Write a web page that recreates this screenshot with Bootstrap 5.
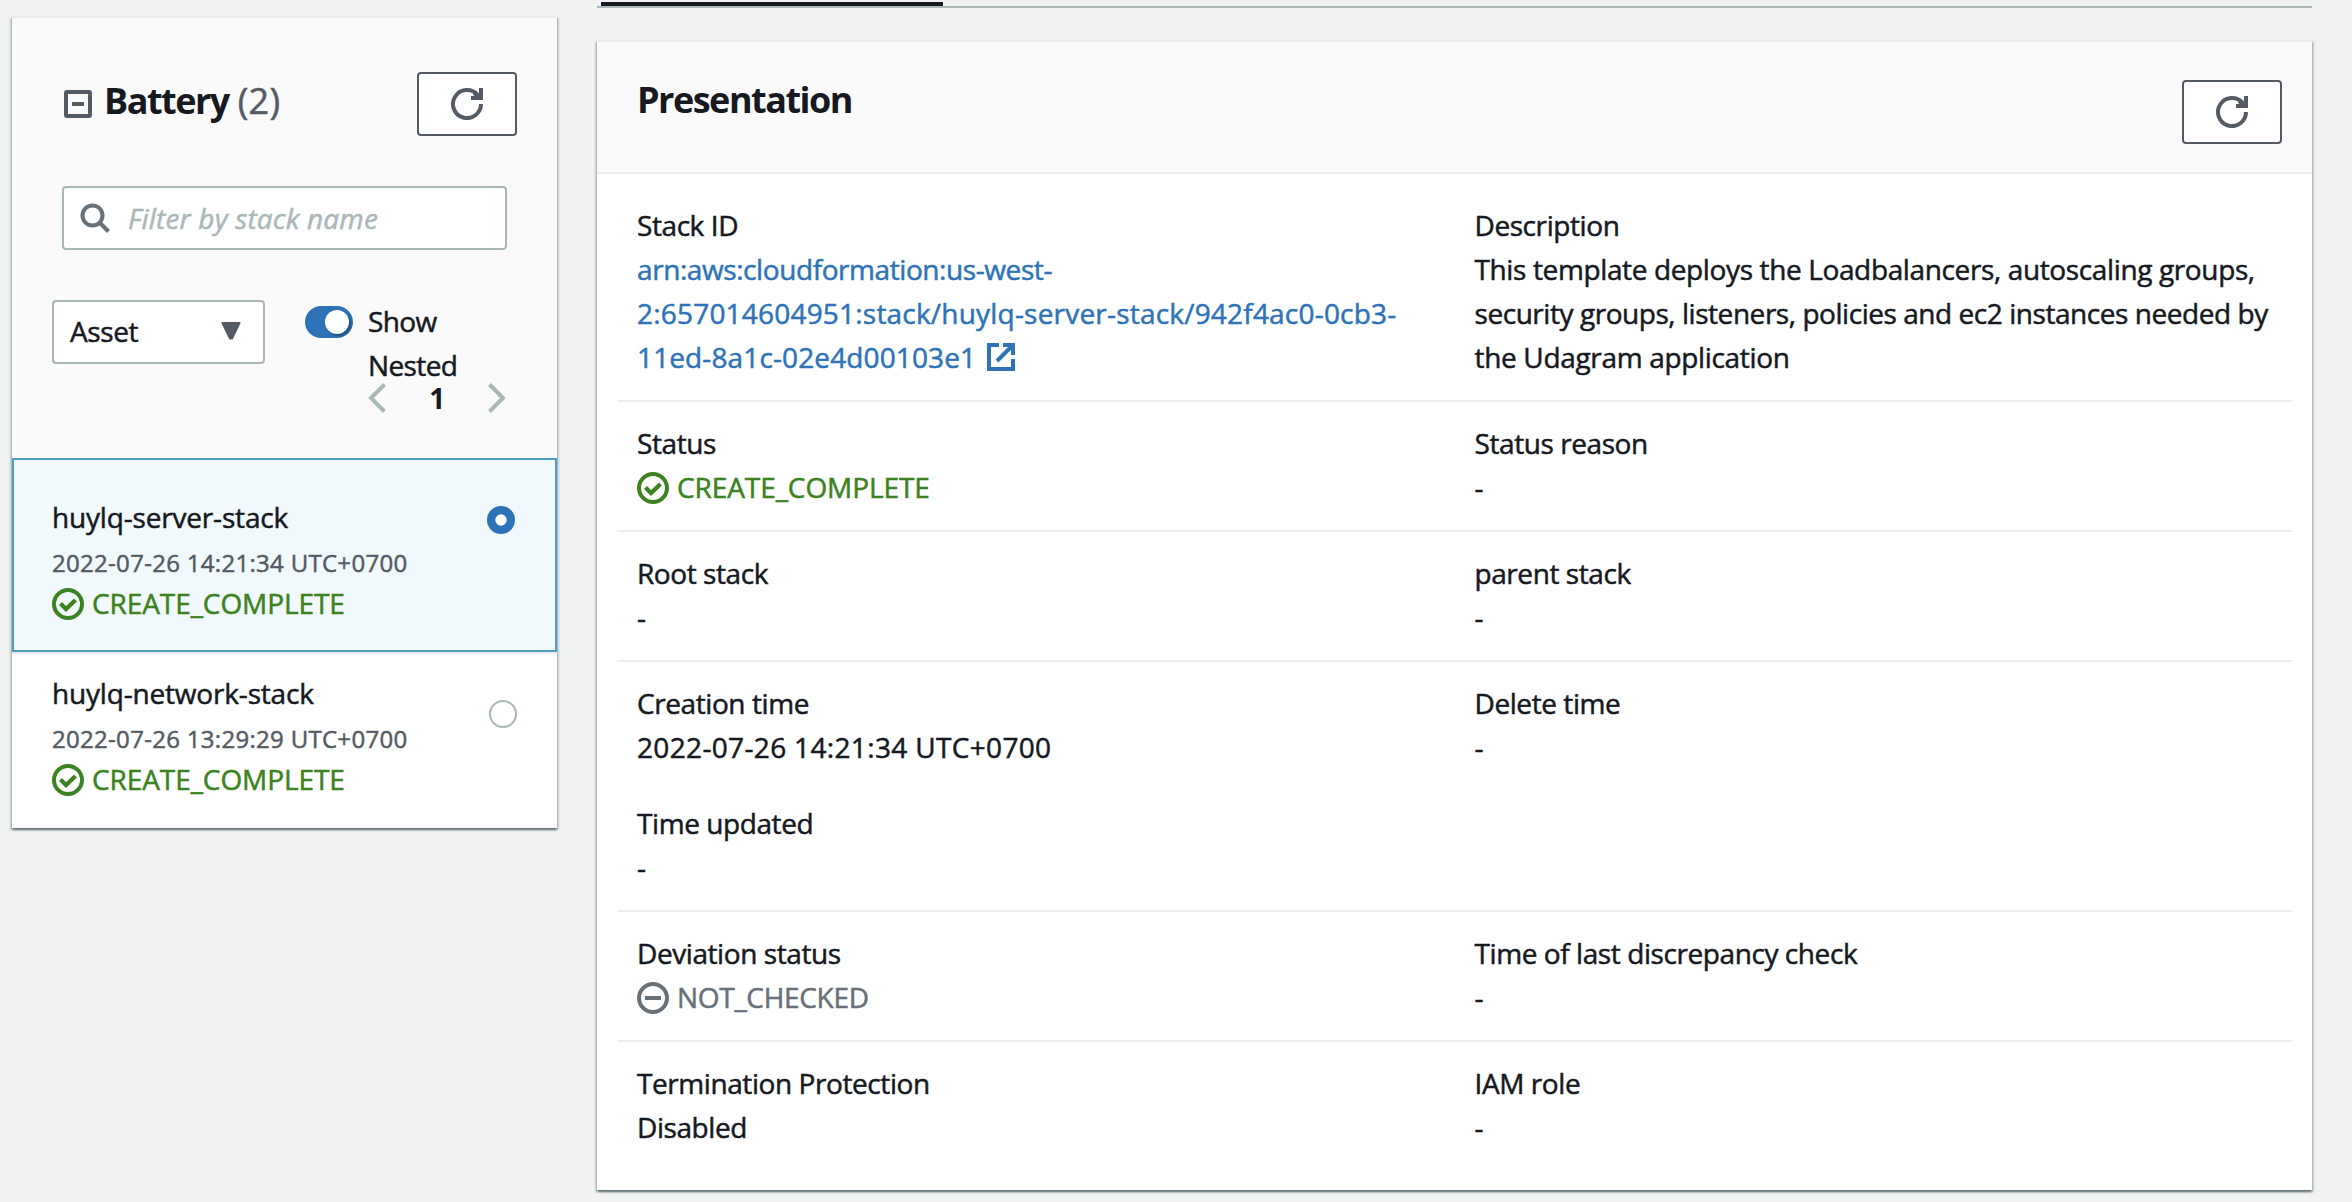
<!DOCTYPE html>
<html lang="en">
<head>
<meta charset="utf-8">
<title>CloudFormation - Stack</title>
<link rel="stylesheet" href="https://cdn.jsdelivr.net/npm/bootstrap@5.3.0/dist/css/bootstrap.min.css">
<style>
body{background:#f1f3f3;color:#16191f;font-family:"Open Sans","Noto Sans",sans-serif;font-size:28px;line-height:44px;letter-spacing:-.42px;-webkit-text-stroke:.5px currentColor;height:1202px;overflow:hidden}
svg{display:block;flex:none}
.page{height:1202px}
.panel{background:#fff;border-top:2px solid #eaeded;box-shadow:0 2px 2px rgba(0,28,36,.45),2px 2px 2px rgba(0,28,36,.15),-2px 2px 2px rgba(0,28,36,.15)}
.side{width:545px;height:812px;margin:16px 0 0 12px;flex:none}
.side-head{background:#fafafa;height:440px;padding:54px 40px 0}
.main-col{width:1715px;margin-left:40px;flex:none}
.tabline{height:8px;border-bottom:2px solid #aab7b8;padding:2px 0 0 4px}
.tab-on{width:342px;height:4px;background:#16191f}
.main-panel{margin-top:32px;height:1150px}
.main-head{height:132px;background:#fafafa;border-bottom:2px solid #eaeded;padding:38px 30px 0 40px}
.ttl{font-size:36px;font-weight:700;line-height:44px;margin:0;letter-spacing:-1.5px;color:#16191f;-webkit-text-stroke:0}
.ttl-side{margin:7px 0 0 12px}
.ttl-main{margin-top:-2px}
.cnt{font-weight:400;color:#545b64;letter-spacing:.3px;margin-left:1px;-webkit-text-stroke:.5px currentColor}
.btn-refresh{width:100px;height:64px;border:2px solid #545b64;border-radius:4px;background:#fff;padding:0}
.gray-ic{color:#545b64}
.fold-ic{margin:18px 0 0 12px}
.search{width:445px;height:64px;margin:50px 0 0 10px;border:2px solid #aab7b8;border-radius:4px;background:#fff;padding-left:16px}
.search input{border:0;background:transparent;outline:0;padding:0 0 0 18px;font-style:italic;letter-spacing:.18px;width:380px;height:58px}
.search input::placeholder{color:#aab7b8;opacity:1}
.controls{margin-top:50px}
.pick{width:213px;height:64px;border:2px solid #aab7b8;border-radius:4px;background:#fff;padding:0 22px 2px 16px}
.switch-box{width:48px;height:32px;border-radius:16px;background:#2e73b8;padding:4px;margin:6px 0 0 40px;flex:none}
.knob{width:24px;height:24px;border-radius:50%;background:#fff;box-shadow:2px 2px 2px rgba(0,28,36,.4)}
.switch-label{width:100px;margin:-1px 0 0 15px;letter-spacing:-.6px}
.pager{margin:-4px 11px 0 0;height:30px}
.pager b{width:102px;line-height:28px;-webkit-text-stroke:0}
.stack-item{padding:17px 40px 27px;height:174px}
.stack-item.on{height:194px;border:2px solid #4aa0c6;background:#f2f9fd;padding:35px 38px 25px}
.radio-on{margin:11px 2px 0 0}
.radio-off{margin-top:29px}
.rule{height:2px;background:#ececec}
.nm{letter-spacing:-.18px}
.dt{font-size:24px;line-height:36px;margin-top:6px;color:#545b64;letter-spacing:.3px}
.ok{color:#3b8220;letter-spacing:-.08px}
.st{height:44px;padding-top:2px}
.st span{margin-left:8px;margin-top:-2px}
.nc{color:#687078;letter-spacing:-.3px}
.props{padding:29px 20px 0}
.prow{margin:0;padding:19px 0 21px;border-top:2px solid #ececec}
.prow:first-child{border:0;padding-top:0}
.prow>div{padding:0 20px}
.later{margin-top:32px}
.arn,.arn:hover{color:#2e73b8;text-decoration:none}
.arn-mid{letter-spacing:.2px}
.arn-end{letter-spacing:.12px}
.ext-ic{margin-left:11px}
.num{letter-spacing:.34px}
.desc-a{letter-spacing:-.37px}
.desc-b{letter-spacing:-.45px}
.desc-c{letter-spacing:-.33px}
</style>
</head>
<body>
<svg width="0" height="0" class="position-absolute">
<symbol id="refresh" viewBox="0 0 32 32"><path d="M30 16A14 14 0 1 1 26.600 6.900" fill="none" stroke="currentColor" stroke-width="4"/><path d="M28 0h4v12H20V8h8z" fill="currentColor"/><path d="M23 5l7 5" stroke="currentColor" stroke-width="4"/></symbol>
<symbol id="okay" viewBox="0 0 32 32"><circle cx="16" cy="16" r="14" fill="none" stroke="currentColor" stroke-width="4"/><path d="M8.500 15.500l5.500 5.500 9.500-9" fill="none" stroke="currentColor" stroke-width="4.200"/></symbol>
<symbol id="ring-minus" viewBox="0 0 32 32"><circle cx="16" cy="16" r="14" fill="none" stroke="currentColor" stroke-width="4"/><path d="M8 16h16" stroke="currentColor" stroke-width="4"/></symbol>
</svg>
<div class="page d-flex align-items-start">
  <aside class="side panel">
    <div class="side-head">
      <div class="d-flex align-items-start">
        <svg class="gray-ic fold-ic" width="28" height="28" viewBox="0 0 28 28"><rect x="2" y="2" width="24" height="24" rx="1" fill="none" stroke="currentColor" stroke-width="4"/><path d="M8 14h12" stroke="currentColor" stroke-width="4"/></svg>
        <h2 class="ttl ttl-side">Battery <span class="cnt">(2)</span></h2>
        <button class="btn btn-refresh gray-ic d-flex align-items-center justify-content-center ms-auto"><svg width="32" height="32"><use href="#refresh"/></svg></button>
      </div>
      <div class="search d-flex align-items-center">
        <svg width="30" height="30" viewBox="0 0 30 30" fill="none" stroke="#687078" stroke-width="4"><circle cx="12.500" cy="12.500" r="10"/><path d="M19.500 19.500l9 9"/></svg>
        <input type="text" placeholder="Filter by stack name">
      </div>
      <div class="controls d-flex align-items-start">
        <div class="pick d-flex align-items-center justify-content-between"><span>Asset</span><svg width="20" height="18" viewBox="0 0 20 18"><path d="M1.500 1h17L11 16.500H9z" fill="#545b64" stroke="#545b64" stroke-width="2" stroke-linejoin="round"/></svg></div>
        <div class="switch-box d-flex justify-content-end"><div class="knob"></div></div>
        <div class="switch-label">Show Nested</div>
      </div>
      <div class="pager d-flex justify-content-end align-items-center">
        <svg width="18" height="30" viewBox="0 0 18 30" fill="none" stroke="#aab7b8" stroke-width="4"><path d="M16.500 1.500L3 15l13.500 13.500"/></svg>
        <b class="text-center">1</b>
        <svg width="18" height="30" viewBox="0 0 18 30" fill="none" stroke="#aab7b8" stroke-width="4"><path d="M1.500 1.500L15 15 1.500 28.500"/></svg>
      </div>
    </div>
    <div class="stack-item on d-flex justify-content-between">
      <div>
        <div class="nm">huylq-server-stack</div>
        <div class="dt">2022-07-26 14:21:34 UTC+0700</div>
        <div class="st ok d-flex align-items-center"><svg width="32" height="32"><use href="#okay"/></svg><span>CREATE_COMPLETE</span></div>
      </div>
      <svg class="radio-on" width="28" height="28" viewBox="0 0 28 28"><circle cx="14" cy="14" r="14" fill="#2e73b8"/><circle cx="14" cy="14" r="5.700" fill="#fff"/></svg>
    </div>
    <div class="rule"></div>
    <div class="stack-item d-flex justify-content-between">
      <div>
        <div class="nm">huylq-network-stack</div>
        <div class="dt">2022-07-26 13:29:29 UTC+0700</div>
        <div class="st ok d-flex align-items-center"><svg width="32" height="32"><use href="#okay"/></svg><span>CREATE_COMPLETE</span></div>
      </div>
      <svg class="radio-off" width="28" height="28" viewBox="0 0 28 28"><circle cx="14" cy="14" r="13" fill="#fff" stroke="#aab7b8" stroke-width="2"/></svg>
    </div>
  </aside>
  <main class="main-col">
    <div class="tabline"><div class="tab-on"></div></div>
    <section class="main-panel panel">
      <div class="main-head d-flex justify-content-between align-items-start">
        <h2 class="ttl ttl-main">Presentation</h2>
        <button class="btn btn-refresh gray-ic d-flex align-items-center justify-content-center"><svg width="32" height="32"><use href="#refresh"/></svg></button>
      </div>
      <div class="props">
        <div class="row prow">
          <div class="col-6"><div>Stack ID</div>
            <a class="arn" href="#">arn:aws:cloudformation:us-west-<br><span class="arn-mid">2:657014604951:stack/huylq-server-stack/942f4ac0-0cb3-</span><br><span class="d-flex align-items-center"><span class="arn-end">11ed-8a1c-02e4d00103e1</span><svg class="ext-ic" width="28" height="28" viewBox="0 0 28 28" fill="none" stroke="currentColor" stroke-width="4"><path d="M12 2H2v24h24V16M10 18L24 4M16 2h10v10"/></svg></span></a>
          </div>
          <div class="col-6"><div>Description</div><span class="desc-a">This template deploys the Loadbalancers, autoscaling groups,</span><br><span class="desc-b">security groups, listeners, policies and ec2 instances needed by</span><br><span class="desc-c">the Udagram application</span></div>
        </div>
        <div class="row prow">
          <div class="col-6"><div>Status</div><div class="st ok d-flex align-items-center"><svg width="32" height="32"><use href="#okay"/></svg><span>CREATE_COMPLETE</span></div></div>
          <div class="col-6"><div>Status reason</div><div>-</div></div>
        </div>
        <div class="row prow">
          <div class="col-6"><div>Root stack</div><div>-</div></div>
          <div class="col-6"><div>parent stack</div><div>-</div></div>
        </div>
        <div class="row prow">
          <div class="col-6"><div>Creation time</div><div class="num">2022-07-26 14:21:34 UTC+0700</div><div class="later">Time updated</div><div>-</div></div>
          <div class="col-6"><div>Delete time</div><div>-</div></div>
        </div>
        <div class="row prow">
          <div class="col-6"><div>Deviation status</div><div class="st nc d-flex align-items-center"><svg width="32" height="32"><use href="#ring-minus"/></svg><span>NOT_CHECKED</span></div></div>
          <div class="col-6"><div>Time of last discrepancy check</div><div>-</div></div>
        </div>
        <div class="row prow">
          <div class="col-6"><div>Termination Protection</div><div>Disabled</div></div>
          <div class="col-6"><div>IAM role</div><div>-</div></div>
        </div>
      </div>
    </section>
  </main>
</div>
<script src="https://cdn.jsdelivr.net/npm/bootstrap@5.3.0/dist/js/bootstrap.bundle.min.js"></script>
</body>
</html>
